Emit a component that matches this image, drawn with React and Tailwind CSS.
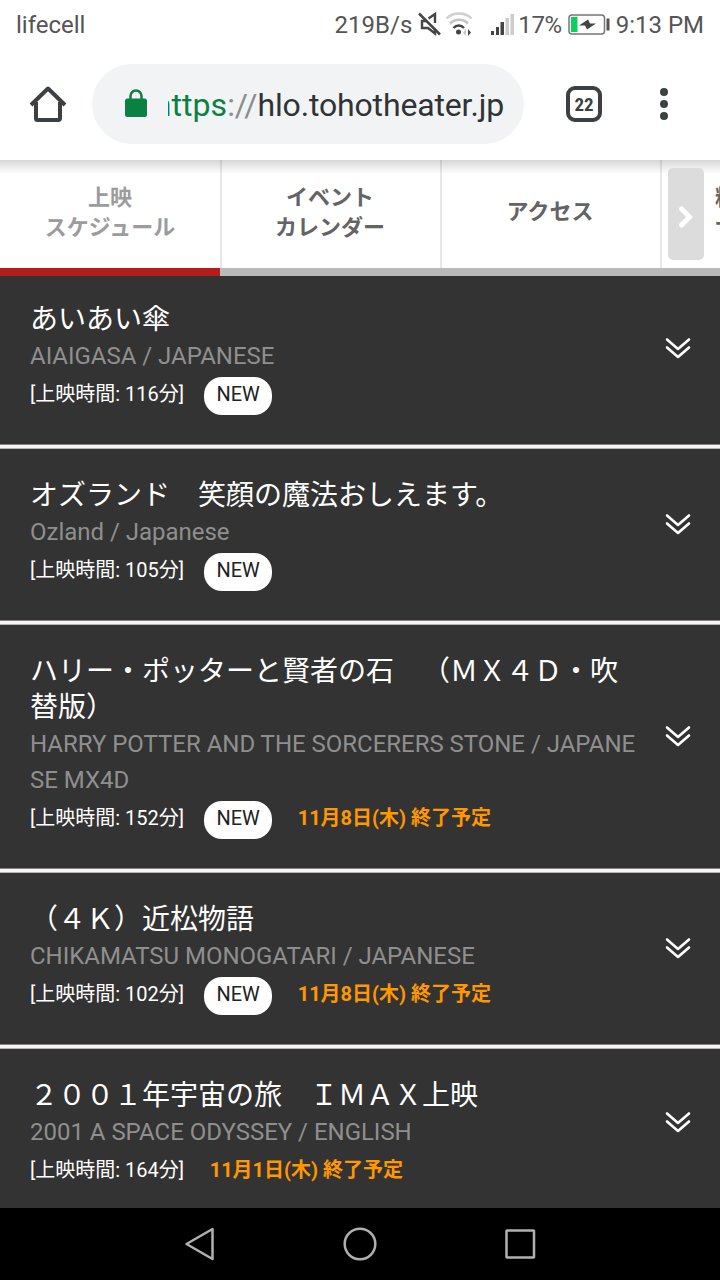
import React from 'react';

const movies = [
  { title: 'あいあい傘', sub: 'AIAIGASA / JAPANESE', minutes: 116, isNew: true },
  { title: 'オズランド　笑顔の魔法おしえます。', sub: 'Ozland / Japanese', minutes: 105, isNew: true },
  {
    title: 'ハリー・ポッターと賢者の石　（ＭＸ４Ｄ・吹替版）',
    sub: 'HARRY POTTER AND THE SORCERERS STONE / JAPANESE MX4D',
    minutes: 152,
    isNew: true,
    ends: '11月8日(木) 終了予定',
  },
  { title: '（４Ｋ）近松物語', sub: 'CHIKAMATSU MONOGATARI / JAPANESE', minutes: 102, isNew: true, ends: '11月8日(木) 終了予定' },
  { title: '２００１年宇宙の旅　ＩＭＡＸ上映', sub: '2001 A SPACE ODYSSEY / ENGLISH', minutes: 164, ends: '11月1日(木) 終了予定' },
];

function StatusBar() {
  return (
    <div className="flex h-12 shrink-0 items-center justify-between px-4 text-[24px] leading-none text-[#555]">
      <span className="pt-0.5">lifecell</span>
      <div className="flex items-center">
        <span className="pt-0.5">219B/s</span>
        {/* Muted speaker */}
        <svg className="ml-[6px]" width="24" height="24" viewBox="0 0 24 24" fill="none" stroke="#444" strokeWidth="2.4">
          <path d="M10.500 6.500 17 2V11M17 17v4.500L10 16H4V9h5" />
          <path d="M1 1.500 22 22.500" strokeWidth="2.500" />
        </svg>
        {/* Wi-Fi */}
        <svg className="ml-[3px]" width="28" height="24" viewBox="0 0 28 24" fill="none">
          <path d="M1.500 6.500C8-.2 20-.2 26.500 6.500" stroke="#d0d0d0" strokeWidth="2.500" />
          <path d="M5 11.500c5-5 13-5 18 0" stroke="#c4c4c4" strokeWidth="2.500" />
          <path d="M8.500 16c3-3.200 7.500-3.200 10.500 0" stroke="#444" strokeWidth="2.500" />
          <circle cx="13.500" cy="20" r="2.500" fill="#444" />
          <path d="m21 17-3 3.500 3 3.500z" fill="#c4c4c4" />
          <path d="m23 17 3 3.500-3 3.500z" fill="#444" />
        </svg>
        {/* Signal */}
        <svg className="ml-[17px]" width="24" height="24" viewBox="0 0 24 24">
          <path fill="#444" d="M1 19h3v4H1zM6 15h3v8H6zM10.500 10h3.500v13h-3.500z" />
          <path fill="#ccc" d="M15.500 6H19v17h-3.500zM20.500 2H24v21h-3.500z" />
        </svg>
        <span className="ml-1 pt-0.5 tracking-[-0.4px]">17%</span>
        {/* Charging battery */}
        <svg className="ml-[6px]" width="42" height="22" viewBox="0 0 42 22">
          <rect x="1" y="2" width="35.500" height="19" rx="3" fill="#fff" stroke="#777" strokeWidth="1.500" />
          <rect x="3" y="4" width="6.500" height="15" fill="#0bd15a" />
          <path d="m20 6.500 2 4h6l-9 6-2-4h-6z" fill="#444" />
          <rect x="38.500" y="5.500" width="3" height="12" fill="#555" />
        </svg>
        <span className="ml-[6px] pt-0.5">9:13 PM</span>
      </div>
    </div>
  );
}

function Toolbar() {
  return (
    <div className="flex h-28 shrink-0 items-start pt-4">
      <svg className="mt-[21px] ml-[29px] shrink-0" width="38" height="38" viewBox="0 0 38 38" fill="none" stroke="#3c4043" strokeWidth="4">
        <path d="M2 20 19 3.500 36 20" strokeLinejoin="round" />
        <path d="M7 17v16.500a1.500 1.500 0 0 0 1.500 1.500h21a1.500 1.500 0 0 0 1.500-1.500V17" />
      </svg>
      <div className="ml-[25px] flex h-20 w-[432px] shrink-0 items-center rounded-full bg-[#f1f3f4] pl-[33px]">
        <svg width="22" height="30" viewBox="0 0 22 30" className="shrink-0">
          <path d="M5.500 12V7a5.500 5.500 0 0 1 11 0V12" fill="none" stroke="#0b8043" strokeWidth="2.500" />
          <rect y="9.500" width="22" height="18.500" rx="2.500" fill="#0b8043" />
        </svg>
        <div className="mt-0.5 ml-[21px] flex w-[336px] justify-end overflow-hidden text-[32px] leading-[44px] tracking-[-0.15px] whitespace-nowrap text-[#303336]">
          <span className="tracking-[0.1px] text-[#0b8043]">https</span>
          <span className="text-[#8a8d90]">://</span>
          <span>hlo.tohotheater.jp</span>
        </div>
      </div>
      <div className="mt-[22px] ml-[42px] flex size-9 shrink-0 items-center justify-center rounded-[9px] border-4 border-[#3c4043] font-['Roboto_Condensed','Roboto'] text-[19px] leading-none font-bold text-[#3c4043]">
        22
      </div>
      <div className="mt-6 ml-[58px] flex flex-col gap-1">
        <i className="size-2 rounded-full bg-[#3c4043]" />
        <i className="size-2 rounded-full bg-[#3c4043]" />
        <i className="size-2 rounded-full bg-[#3c4043]" />
      </div>
    </div>
  );
}

function Tabs() {
  return (
    <div className="relative h-[116px] shrink-0 overflow-hidden bg-white text-[22px] leading-[30px] font-bold text-[#646464]">
      <div className="flex w-[880px] text-center">
        <div className="flex h-[116px] w-[220px] flex-col border-b-8 border-[#b71c1c] pt-[23px] text-[#9c9c9c]">
          <span>上映</span>
          <span>スケジュール</span>
        </div>
        <div className="flex h-[116px] w-[220px] flex-col border-b-8 border-[#bababa] pt-[23px] shadow-[inset_2px_0_#e8e8e8]">
          <span>イベント</span>
          <span>カレンダー</span>
        </div>
        <div className="flex h-[116px] w-[220px] flex-col border-b-8 border-[#bababa] pt-[37px] shadow-[inset_2px_0_#e8e8e8]">
          <span>アクセス</span>
        </div>
        <div className="flex h-[116px] w-[220px] flex-col border-b-8 border-[#bababa] pt-[23px] pl-[55px] text-left shadow-[inset_2px_0_#e8e8e8]">
          <span>料金・</span>
          <span>サービス</span>
        </div>
      </div>
      <div className="absolute inset-x-0 top-0 h-3.5 bg-linear-to-b from-black/16 to-transparent" />
      <div className="absolute top-2 left-[668px] flex h-[92px] w-9 items-center justify-center rounded-[5px] bg-[#dcdcdc]">
        <svg width="18" height="26" viewBox="0 0 18 26" fill="none" stroke="#fff" strokeWidth="5" strokeLinecap="round" className="mt-1.5">
          <path d="m4.500 5 8 8-8 8" />
        </svg>
      </div>
    </div>
  );
}

function MovieRow({ movie, first }) {
  return (
    <>
      <div className={`flex items-center pr-[29px] pb-[29px] pl-[30px] ${first ? 'pt-[26px]' : 'pt-[29px]'}`}>
        <div className="w-[608px] shrink-0">
          <h2 className="text-[28px] leading-9 break-all text-white [text-spacing-trim:space-all]">{movie.title}</h2>
          <p className="text-[24px] leading-9 tracking-[-0.02px] break-all text-[#8f8f8f]">{movie.sub}</p>
          <div className={`mt-[3px] flex text-[20px] leading-[34px] text-white ${movie.isNew ? 'h-[38px]' : 'h-[34px]'}`}>
            <span>[上映時間: {movie.minutes}分]</span>
            {movie.isNew && (
              <span className="ml-5 h-[38px] w-[68px] rounded-[18px] bg-white text-center text-[#222]">NEW</span>
            )}
            {movie.ends && <span className="ml-[25.5px] font-bold text-[#ff9800]">{movie.ends}</span>}
          </div>
        </div>
        <svg className="mb-[22px] ml-auto shrink-0" width="26" height="22" viewBox="0 0 26 22" fill="none" stroke="#fff" strokeWidth="2.600" strokeLinecap="round" strokeLinejoin="round">
          <path d="m2 2.500 11 9.500 11-9.500M2 10.500 13 20l11-9.500" />
        </svg>
      </div>
      <div className="h-[5px] border-t border-b border-t-[#858384] border-b-[#b5b3b4] bg-[#f8f5f6]" />
    </>
  );
}

function NavBar() {
  return (
    <div className="flex h-[72px] shrink-0 items-center justify-center gap-[124px] bg-black">
      <svg width="36" height="36" viewBox="0 0 36 36" fill="none" stroke="#b0b0b0" strokeWidth="2.500" strokeLinejoin="round">
        <path d="M4.500 18 30.500 3v30z" />
      </svg>
      <svg width="36" height="36" viewBox="0 0 36 36" fill="none" stroke="#b0b0b0" strokeWidth="2.500">
        <circle cx="18" cy="18" r="15.300" />
      </svg>
      <svg width="36" height="36" viewBox="0 0 36 36" fill="none" stroke="#b0b0b0" strokeWidth="2.500">
        <rect x="4.500" y="4.500" width="27.500" height="27" rx="0.500" />
      </svg>
    </div>
  );
}

function App() {
  return (
    <div className="flex h-[1280px] w-[720px] flex-col overflow-hidden bg-white font-['Roboto','Noto_Sans_CJK_JP',sans-serif]" lang="ja">
      <StatusBar />
      <Toolbar />
      <Tabs />
      <div className="min-h-0 flex-1 overflow-hidden bg-[#333]">
        {movies.map((movie, index) => (
          <MovieRow key={movie.sub} movie={movie} first={index === 0} />
        ))}
      </div>
      <NavBar />
    </div>
  );
}

export default App;
